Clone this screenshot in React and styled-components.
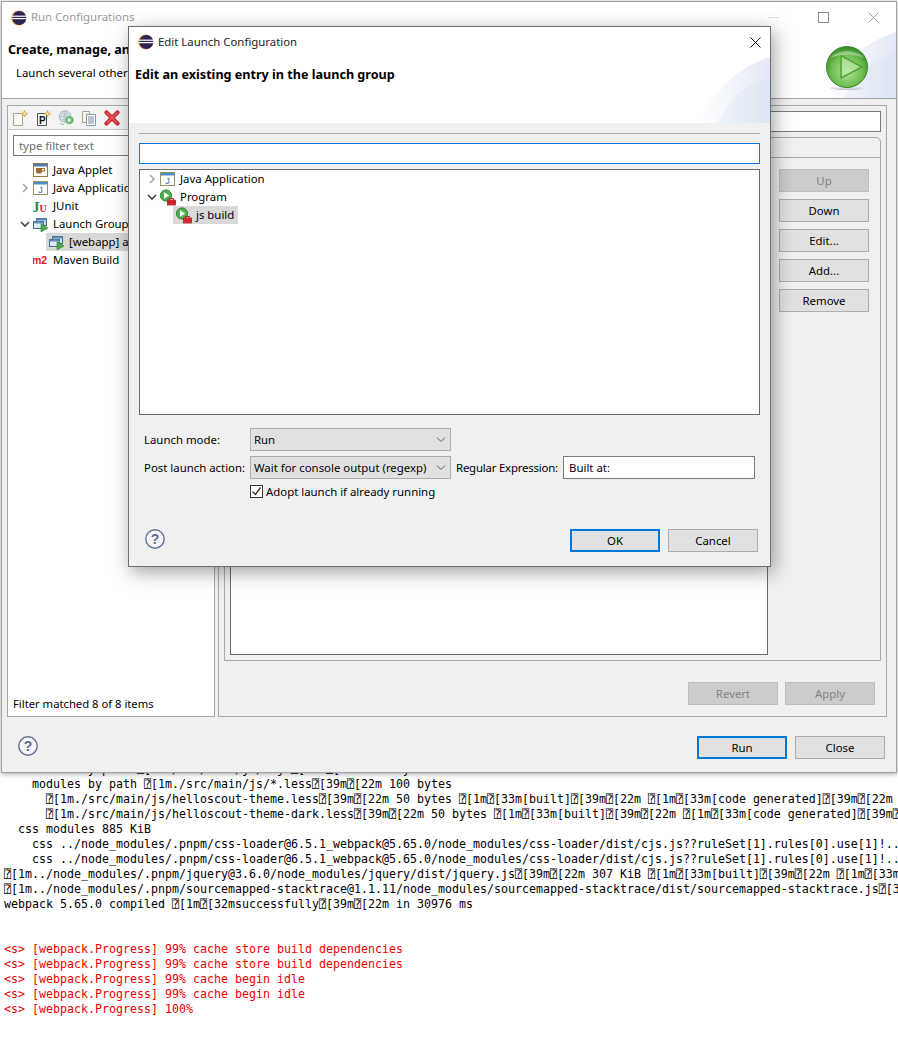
import React from 'react';
import styled, { createGlobalStyle } from 'styled-components';

const Global = createGlobalStyle`
  html, body { margin: 0; padding: 0; background: #fff; }
  body { font-family: "Noto Sans", "Open Sans", sans-serif; font-size: 11.4px; color: #000; }
  * { box-sizing: border-box; }
`;

const Page = styled.div`
  position: relative;
  width: 898px;
  height: 1037px;
  overflow: hidden;
  background: #fff;
`;

const MainWindow = styled.div`
  position: relative;
  z-index: 1;
  margin: 1px 0 0 1px;
  width: 896px;
  height: 772px;
  display: flex;
  flex-direction: column;
  background: #f0f0f0;
  border: 1px solid #a3a3a3;
  box-shadow: 0 1px 5px rgba(0, 0, 0, 0.35);
`;

const TitleBar = styled.div`
  height: ${p => p.$h}px;
  flex: none;
  display: flex;
  align-items: center;
  background: #fff;
  padding-left: 9px;
  gap: 4px;
  color: ${p => p.$color};
`;

const TitleText = styled.span`
  font-size: 11.4px;
  flex: 1;
  position: relative;
  top: -1px;
`;

const WinBtn = styled.span`
  width: ${p => p.$w}px;
  height: 100%;
  display: flex;
  align-items: center;
  justify-content: center;
`;

const Banner = styled.div`
  position: relative;
  height: 66px;
  flex: none;
  background: #fff;
  padding: ${p => p.$top}px 6px 0;
  border-bottom: ${p => (p.$line ? '1px solid #a0a0a0' : '0')};
`;

const Heading = styled.div`
  font-weight: 700;
  font-size: 12.6px;
  line-height: 16px;
  white-space: nowrap;
`;

const SubHeading = styled.div`
  margin: 7px 0 0 8px;
  line-height: 16px;
  white-space: nowrap;
`;

const ArcArt = styled.svg`
  position: absolute;
  right: 0;
  bottom: 0;
`;

const BigRun = styled.svg`
  position: absolute;
  right: 27px;
  top: 13px;
`;

const MainBody = styled.div`
  flex: none;
  height: 618px;
  display: flex;
  gap: 3px;
  padding: 6px 0 0 5px;
`;

const LeftPanel = styled.div`
  width: 208px;
  height: 612px;
  display: flex;
  flex-direction: column;
  background: #fff;
  border: 1px solid #a8a8a8;
`;

const Toolbar = styled.div`
  height: 24px;
  flex: none;
  display: flex;
  align-items: center;
  gap: 7px;
  padding-left: 4px;
  background: #f3f3f3;
  border-bottom: 1px solid #c8c8c8;
  overflow: hidden;
`;

const ToolSep = styled.span`
  width: 1px;
  height: 20px;
  background: #a0a0a0;
  margin-left: 2px;
`;

const FilterInput = styled.input`
  margin: 5px 0 0 5px;
  width: 192px;
  height: 21px;
  flex: none;
  padding: 0 5px;
  border: 1px solid #7a7a7a;
  font: inherit;
  outline: none;
  &::placeholder { color: #6d6d6d; opacity: 1; }
`;

const MainTree = styled.div`
  margin-top: 5px;
  flex: 1;
  overflow: hidden;
`;

const Row = styled.div`
  height: 18px;
  display: flex;
  align-items: center;
  padding-left: ${p => p.$pad + p.$depth * 13}px;
  white-space: nowrap;
`;

const Twist = styled.span`
  width: 16px;
  flex: none;
  display: flex;
  justify-content: center;
`;

const Item = styled.span`
  height: 18px;
  display: inline-flex;
  align-items: center;
  gap: 4px;
  padding: ${p => (p.$selected ? '0 4px 0 3px' : '0')};
  background: ${p => (p.$selected ? '#d9d9d9' : 'transparent')};
  line-height: 18px;
`;

const FilterStatus = styled.div`
  padding: 0 0 4px 5px;
  font-size: 11.25px;
  line-height: 16px;
`;

const RightPanel = styled.div`
  width: 669px;
  height: 612px;
  display: flex;
  flex-direction: column;
  border: 1px solid #a8a8a8;
  padding: 5px 5px 0;
`;

const NameRow = styled.div`
  height: 21px;
  flex: none;
  display: flex;
  align-items: center;
  gap: 8px;
`;

const TextField = styled.input`
  flex: ${p => (p.$grow ? 1 : 'none')};
  width: ${p => (p.$w ? `${p.$w}px` : 'auto')};
  height: ${p => p.$h}px;
  min-width: 0;
  padding: 0 5px;
  border: 1px solid ${p => p.$border};
  background: #fff;
  font: inherit;
  color: #000;
  outline: none;
`;

const TabFolder = styled.div`
  margin-top: 5px;
  height: 524px;
  flex: none;
  border: 1px solid #a8a8a8;
  border-top-right-radius: 5px;
  display: flex;
  flex-direction: column;
`;

const TabHeader = styled.div`
  height: 20px;
  flex: none;
  padding-left: 8px;
  line-height: 19px;
  border-bottom: 1px solid #a8a8a8;
`;

const TabContent = styled.div`
  flex: 1;
  display: flex;
  padding: 5px 11px 5px 5px;
  gap: 11px;
`;

const Table = styled.div`
  width: 538px;
  background: #fff;
  border: 1px solid #6b6b6b;
`;

const ButtonColumn = styled.div`
  display: flex;
  flex-direction: column;
  gap: 7px;
  padding-top: 6px;
`;

const Button = styled.button`
  width: 90px;
  height: 23px;
  flex: none;
  padding: 0;
  background: ${p => (p.$disabled ? '#cccccc' : '#e1e1e1')};
  border: ${p => (p.$primary ? '2px solid #0078d7' : `1px solid ${p.$disabled ? '#bfbfbf' : '#adadad'}`)};
  color: ${p => (p.$disabled ? '#838383' : '#000')};
  font: inherit;
  font-size: 11.4px;
  line-height: 19px;
`;

const RevertRow = styled.div`
  margin-top: 21px;
  display: flex;
  justify-content: flex-end;
  gap: 7px;
  padding-right: 6px;
`;

const MainFooter = styled.div`
  flex: 1;
  display: flex;
  align-items: flex-start;
  padding: 19px 11px 0 16px;
  gap: 8px;
`;

const HelpSlot = styled.span`
  flex: 1;
  display: flex;
`;

const Console = styled.pre`
  margin: -11px 0 0;
  padding-left: 4px;
  font-family: "DejaVu Sans Mono", "Liberation Mono", monospace;
  font-size: 11.63px;
  line-height: 15px;
  white-space: pre;
  color: #000;
`;

const Err = styled.span`
  color: #f00000;
`;

const Dialog = styled.div`
  position: absolute;
  z-index: 2;
  left: 128px;
  top: 26px;
  width: 643px;
  height: 541px;
  display: flex;
  flex-direction: column;
  background: #f0f0f0;
  border: 1px solid #6f6f6f;
  box-shadow: 3px 5px 18px rgba(0, 0, 0, 0.38);
`;

const DialogBody = styled.div`
  flex: 1;
  display: flex;
  flex-direction: column;
  padding: 10px 10px 0;
`;

const Rule = styled.div`
  height: 1px;
  flex: none;
  background: #a8a8a8;
  margin-bottom: 9px;
`;

const DialogTree = styled.div`
  margin-top: 5px;
  height: 246px;
  flex: none;
  background: #fff;
  border: 1px solid #6b6b6b;
`;

const FormRow = styled.div`
  margin-top: ${p => p.$top}px;
  height: 23px;
  display: flex;
  align-items: center;
  padding-left: 5px;
  line-height: 20px;
`;

const FieldLabel = styled.span`
  width: ${p => p.$w}px;
  flex: none;
  margin-left: ${p => p.$left || 0}px;
  letter-spacing: ${p => (p.$tight ? '-0.2px' : '0')};
  white-space: nowrap;
`;

const SelectBox = styled.div`
  width: 201px;
  height: 23px;
  flex: none;
  display: flex;
  align-items: center;
  justify-content: space-between;
  padding: 0 4px 0 3px;
  background: #e1e1e1;
  border: 1px solid #adadad;
  white-space: nowrap;
`;

const CheckRow = styled.label`
  margin: 6px 0 0 111px;
  display: flex;
  align-items: center;
  gap: 3px;
  height: 13px;
  white-space: nowrap;
`;

const CheckMark = styled.span`
  width: 13px;
  height: 13px;
  flex: none;
  display: flex;
  background: #fff;
  border: 1px solid #333;
`;

const DialogFooter = styled.div`
  margin-top: 31px;
  display: flex;
  align-items: flex-start;
  gap: 8px;
  padding: 0 2px 0 6px;
`;

const Chevron = ({ open }) => (
  <svg width="10" height="10" viewBox="0 0 10 10" fill="none" stroke={open ? '#444' : '#a8a8a8'} strokeWidth="1.6">
    <path d={open ? 'M1 3l4 4 4-4' : 'M3 1l4 4-4 4'} />
  </svg>
);

const ComboArrow = () => (
  <svg width="10" height="6" viewBox="0 0 10 6" fill="none" stroke="#606060" strokeWidth="1">
    <path d="M1 .5l4 4 4-4" />
  </svg>
);

const Eclipse = () => (
  <svg width="16" height="16" viewBox="0 0 16 16">
    <circle cx="7.6" cy="8" r="7.5" fill="#f3a53c" />
    <circle cx="8.3" cy="8" r="7" fill="#2c2255" />
    <rect x="1" y="5.6" width="14.4" height="1.2" fill="#fff" />
    <rect x="1" y="8" width="14.4" height="1.2" fill="#fff" />
  </svg>
);

const ArcPic = ({ id }) => (
  <ArcArt width="72" height="66" viewBox="0 0 72 66">
    <defs>
      <linearGradient id={id} x1="0" y1="0" x2="1" y2="0">
        <stop offset="0" stopColor="#ffffff" />
        <stop offset="1" stopColor="#e2e8f6" />
      </linearGradient>
    </defs>
    <path d="M72 0C45 8 16 30 0 66h72z" fill={`url(#${id})`} />
    <path d="M72 22C50 25 32 40 20 66h52z" fill="#cfd9ef" opacity="0.22" />
  </ArcArt>
);

const RunBig = () => (
  <BigRun width="44" height="46" viewBox="0 0 44 46">
    <defs>
      <radialGradient id="runG" cx="0.5" cy="0.6" r="0.6">
        <stop offset="0" stopColor="#b6e39f" />
        <stop offset="0.65" stopColor="#6ebc4c" />
        <stop offset="1" stopColor="#35862a" />
      </radialGradient>
      <linearGradient id="runS" x1="0" y1="0" x2="0" y2="1">
        <stop offset="0" stopColor="#e6e6e6" stopOpacity="0.2" />
        <stop offset="1" stopColor="#bdbdbd" />
      </linearGradient>
    </defs>
    <ellipse cx="22" cy="42" rx="17" ry="2" fill="url(#runS)" />
    <circle cx="22" cy="21" r="20.5" fill="url(#runG)" stroke="#3a8a2c" />
    <path d="M16 9.5L37 21 16 32z" fill="#c5ecae" fillOpacity="0.55" stroke="#4fa838" strokeWidth="1.6" />
    <path d="M5 12C12 3 32 3 39 12 30 8 14 8 5 12z" fill="#fff" fillOpacity="0.35" />
  </BigRun>
);

const Help = () => (
  <svg width="20" height="20" viewBox="0 0 20 20">
    <circle cx="10" cy="10" r="9.2" fill="#f4f5f8" stroke="#64708f" strokeWidth="1.4" />
    <text x="10" y="15" fontFamily="Liberation Sans, sans-serif" fontWeight="700" fontSize="14" fill="#5c6a8c" textAnchor="middle">?</text>
  </svg>
);

const Star = () => (
  <path d="M12.5 0.5l1 2.2 2.2 1-2.2 1-1 2.2-1-2.2-2.2-1 2.2-1z" fill="#fbe28a" stroke="#c9962c" strokeWidth="0.7" />
);

const NewDoc = () => (
  <svg width="16" height="16" viewBox="0 0 16 16">
    <path d="M2.5 3.5h8v12h-9v-12z" fill="#fbfaf0" stroke="#a9a487" />
    <Star />
  </svg>
);

const ProtoDoc = () => (
  <svg width="16" height="16" viewBox="0 0 16 16">
    <path d="M2.5 3.5h9v12h-9z" fill="#f7f7f2" stroke="#4d5560" />
    <text x="4" y="13.6" fontFamily="Liberation Sans, sans-serif" fontWeight="700" fontSize="10" fill="#111">P</text>
    <Star />
  </svg>
);

const GlobePlay = () => (
  <svg width="16" height="16" viewBox="0 0 16 16">
    <circle cx="7" cy="6.5" r="5.7" fill="#d6dfe8" stroke="#9fb0c2" />
    <path d="M1.5 6.5h11M7 1v11M3.5 3c2 1.5 5 1.5 7 0M3.5 10c2-1.5 5-1.5 7 0" fill="none" stroke="#aebccb" strokeWidth="0.8" />
    <path d="M2 13l2 1.500 2 0" fill="none" stroke="#9fb0c2" />
    <circle cx="11.5" cy="10" r="4.3" fill="#6dbb75" />
    <path d="M10 7.8l3.6 2.2-3.6 2.2z" fill="#fff" />
  </svg>
);

const CopyDoc = () => (
  <svg width="16" height="16" viewBox="0 0 16 16">
    <path d="M1.5 1.500h7v11h-7z" fill="#f6f4e7" stroke="#a9a487" />
    <path d="M5.5 4.500h9v11h-9z" fill="#fdfdf8" stroke="#8a9cb5" />
    <path d="M7 7h6M7 9h6M7 11h6M7 13h6" stroke="#6f8fc0" />
  </svg>
);

const RedX = () => (
  <svg width="16" height="16" viewBox="0 0 16 16">
    <path d="M2.5 2.5l11 11M13.5 2.5l-11 11" stroke="#c8282e" strokeWidth="4.2" strokeLinecap="round" />
    <path d="M3 3l10 10M13 3L3 13" stroke="#ee5a5e" strokeWidth="1.6" strokeLinecap="round" />
  </svg>
);

const JavaApp = () => (
  <svg width="16" height="16" viewBox="0 0 16 16">
    <rect x="0.5" y="1.5" width="14" height="13" fill="#fff" stroke="#9a8f63" />
    <rect x="1" y="2" width="13" height="2.5" fill="#4a90c8" />
    <text x="7.5" y="12.8" fontFamily="Liberation Sans, sans-serif" fontSize="9" fill="#2f6aa5" textAnchor="middle">J</text>
  </svg>
);

const JavaApplet = () => (
  <svg width="16" height="16" viewBox="0 0 16 16">
    <rect x="0.5" y="1.5" width="14" height="13" fill="#fff" stroke="#8d7a4c" />
    <rect x="1" y="2" width="13" height="2.5" fill="#4a7fb0" />
    <path d="M3 6h6v3.500c0 1.500-1 2-3 2s-3-.5-3-2z" fill="#9c6a24" />
    <path d="M9 6.5h2.500v2.500H9" fill="none" stroke="#9c6a24" />
  </svg>
);

const JUnit = () => (
  <svg width="16" height="16" viewBox="0 0 16 16">
    <text x="-1" y="13.5" fontFamily="Liberation Serif, serif" fontWeight="700" fontSize="15" fill="#2e8b4a">J</text>
    <text x="6.5" y="14" fontFamily="Liberation Serif, serif" fontWeight="700" fontSize="10" fill="#c8282e">U</text>
  </svg>
);

const LaunchGroup = () => (
  <svg width="16" height="16" viewBox="0 0 16 16">
    <rect x="3.5" y="2.5" width="10" height="7" fill="#cfe0ef" stroke="#3f6b90" />
    <rect x="3.5" y="2.5" width="10" height="2" fill="#5d8db5" />
    <rect x="0.5" y="5.5" width="10" height="7" fill="#dfeaf4" stroke="#3f6b90" />
    <rect x="0.5" y="5.5" width="10" height="2" fill="#5d8db5" />
    <path d="M8 7.5l7 4.500-7 4z" fill="#4fa94d" stroke="#2e7d32" strokeWidth="0.6" />
  </svg>
);

const Maven = () => (
  <svg width="16" height="16" viewBox="0 0 16 16">
    <text x="-1" y="12" fontFamily="Liberation Sans, sans-serif" fontWeight="700" fontSize="10.500" fill="#e0141c">m2</text>
  </svg>
);

const ProgramIcon = () => (
  <svg width="16" height="17" viewBox="0 0 16 17">
    <circle cx="6" cy="6.5" r="5.6" fill="#4fae4f" stroke="#2f7f35" />
    <path d="M4 3.300l5.200 3.200-5.200 3.200z" fill="#fff" />
    <rect x="7.5" y="11" width="8" height="5" fill="#e0323a" stroke="#a8141c" strokeWidth="0.7" />
    <path d="M9.500 11V9.500h4V11M7.500 13.300h8" fill="none" stroke="#a8141c" strokeWidth="0.9" />
  </svg>
);

const TreeRow = ({ pad, depth = 0, twist, selected, icon, children }) => (
  <Row $pad={pad} $depth={depth}>
    <Twist>{twist && <Chevron open={twist === 'open'} />}</Twist>
    <Item $selected={selected}>{icon}{children}</Item>
  </Row>
);

const box = '⍰';
const lines = `   modules by path ${box}[1m./src/main/js/*.js${box}[39m${box}[22m 100 bytes
    modules by path ${box}[1m./src/main/js/*.less${box}[39m${box}[22m 100 bytes
      ${box}[1m./src/main/js/helloscout-theme.less${box}[39m${box}[22m 50 bytes ${box}[1m${box}[33m[built]${box}[39m${box}[22m ${box}[1m${box}[33m[code generated]${box}[39m${box}[22m
      ${box}[1m./src/main/js/helloscout-theme-dark.less${box}[39m${box}[22m 50 bytes ${box}[1m${box}[33m[built]${box}[39m${box}[22m ${box}[1m${box}[33m[code generated]${box}[39m${box}[22m
  css modules 885 KiB
    css ../node_modules/.pnpm/css-loader@6.5.1_webpack@5.65.0/node_modules/css-loader/dist/cjs.js??ruleSet[1].rules[0].use[1]!..
    css ../node_modules/.pnpm/css-loader@6.5.1_webpack@5.65.0/node_modules/css-loader/dist/cjs.js??ruleSet[1].rules[0].use[1]!..
${box}[1m../node_modules/.pnpm/jquery@3.6.0/node_modules/jquery/dist/jquery.js${box}[39m${box}[22m 307 KiB ${box}[1m${box}[33m[built]${box}[39m${box}[22m ${box}[1m${box}[33m[code
${box}[1m../node_modules/.pnpm/sourcemapped-stacktrace@1.1.11/node_modules/sourcemapped-stacktrace/dist/sourcemapped-stacktrace.js${box}[39m
webpack 5.65.0 compiled ${box}[1m${box}[32msuccessfully${box}[39m${box}[22m in 30976 ms


`;

const errors = `<s> [webpack.Progress] 99% cache store build dependencies
<s> [webpack.Progress] 99% cache store build dependencies
<s> [webpack.Progress] 99% cache begin idle
<s> [webpack.Progress] 99% cache begin idle
<s> [webpack.Progress] 100%`;

export default function App() {
  return (
    <Page>
      <Global />
      <MainWindow>
        <TitleBar $h={31} $color="#999">
          <Eclipse />
          <TitleText>Run Configurations</TitleText>
          <WinBtn $w={46}><svg width="11" height="11"><path d="M0 5.500h11" stroke="#e0e0e0" /></svg></WinBtn>
          <WinBtn $w={46}><svg width="11" height="11"><rect x="0.5" y="0.5" width="10" height="10" fill="none" stroke="#8c8c8c" /></svg></WinBtn>
          <WinBtn $w={46}><svg width="11" height="11"><path d="M0.5 0.5l10 10M10.500 0.5l-10 10" stroke="#9a9a9a" /></svg></WinBtn>
        </TitleBar>
        <Banner $top={9} $line>
          <ArcPic id="arcMain" />
          <RunBig />
          <Heading>Create, manage, and run configurations</Heading>
          <SubHeading>Launch several other configurations sequentially</SubHeading>
        </Banner>
        <MainBody>
          <LeftPanel>
            <Toolbar>
              <NewDoc />
              <ProtoDoc />
              <GlobePlay />
              <CopyDoc />
              <RedX />
              <ToolSep />
            </Toolbar>
            <FilterInput placeholder="type filter text" />
            <MainTree>
              <TreeRow pad={9} icon={<JavaApplet />}>Java Applet</TreeRow>
              <TreeRow pad={9} twist="closed" icon={<JavaApp />}>Java Application</TreeRow>
              <TreeRow pad={9} icon={<JUnit />}>JUnit</TreeRow>
              <TreeRow pad={9} twist="open" icon={<LaunchGroup />}>Launch Group</TreeRow>
              <TreeRow pad={9} depth={1} selected icon={<LaunchGroup />}>[webapp] all</TreeRow>
              <TreeRow pad={9} icon={<Maven />}>Maven Build</TreeRow>
            </MainTree>
            <FilterStatus>Filter matched 8 of 8 items</FilterStatus>
          </LeftPanel>
          <RightPanel>
            <NameRow>
              <span>Name:</span>
              <TextField $grow $h={21} $border="#7a7a7a" defaultValue="[webapp] all" />
            </NameRow>
            <TabFolder>
              <TabHeader>Launches</TabHeader>
              <TabContent>
                <Table />
                <ButtonColumn>
                  <Button $disabled>Up</Button>
                  <Button>Down</Button>
                  <Button>Edit...</Button>
                  <Button>Add...</Button>
                  <Button>Remove</Button>
                </ButtonColumn>
              </TabContent>
            </TabFolder>
            <RevertRow>
              <Button $disabled>Revert</Button>
              <Button $disabled>Apply</Button>
            </RevertRow>
          </RightPanel>
        </MainBody>
        <MainFooter>
          <HelpSlot><Help /></HelpSlot>
          <Button $primary>Run</Button>
          <Button>Close</Button>
        </MainFooter>
      </MainWindow>
      <Console>{lines}<Err>{errors}</Err></Console>
      <Dialog>
        <TitleBar $h={30} $color="#222">
          <Eclipse />
          <TitleText>Edit Launch Configuration</TitleText>
          <WinBtn $w={30}><svg width="11" height="11"><path d="M0.5 0.5l10 10M10.500 0.5l-10 10" stroke="#111" /></svg></WinBtn>
        </TitleBar>
        <Banner $top={10}>
          <ArcPic id="arcDialog" />
          <Heading>Edit an existing entry in the launch group</Heading>
        </Banner>
        <DialogBody>
          <Rule />
          <TextField $h={21} $border="#0078d7" />
          <DialogTree>
            <TreeRow pad={4} twist="closed" icon={<JavaApp />}>Java Application</TreeRow>
            <TreeRow pad={4} twist="open" icon={<ProgramIcon />}>Program</TreeRow>
            <TreeRow pad={4} depth={1} selected icon={<ProgramIcon />}>js build</TreeRow>
          </DialogTree>
          <FormRow $top={13}>
            <FieldLabel $w={106}>Launch mode:</FieldLabel>
            <SelectBox>Run<ComboArrow /></SelectBox>
          </FormRow>
          <FormRow $top={5}>
            <FieldLabel $w={106}>Post launch action:</FieldLabel>
            <SelectBox>Wait for console output (regexp)<ComboArrow /></SelectBox>
            <FieldLabel $w={107} $left={5} $tight>Regular Expression:</FieldLabel>
            <TextField $w={192} $h={23} $border="#7a7a7a" defaultValue="Built at:" />
          </FormRow>
          <CheckRow>
            <CheckMark>
              <svg width="11" height="11" viewBox="0 0 11 11" fill="none" stroke="#333" strokeWidth="1.3"><path d="M1.5 5.500l3 3 5-7" /></svg>
            </CheckMark>
            Adopt launch if already running
          </CheckRow>
          <DialogFooter>
            <HelpSlot><Help /></HelpSlot>
            <Button $primary>OK</Button>
            <Button>Cancel</Button>
          </DialogFooter>
        </DialogBody>
      </Dialog>
    </Page>
  );
}
